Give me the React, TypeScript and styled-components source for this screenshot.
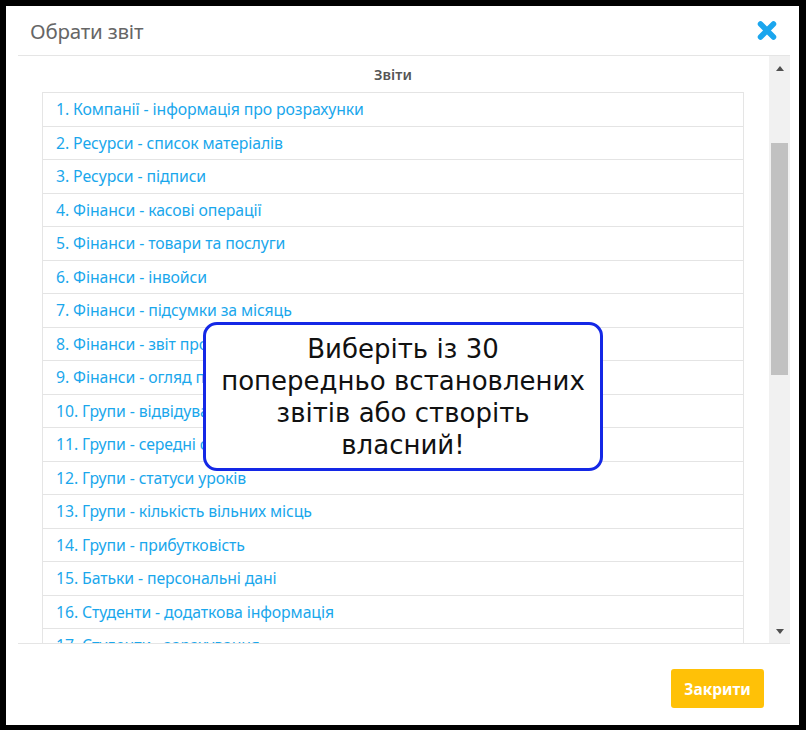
import styled, { createGlobalStyle } from "styled-components";

const GlobalStyle = createGlobalStyle`
    body {
        margin: 0;
        background: #fff;
    }
`;

const Frame = styled.div`
    position: relative;
    width: 806px;
    height: 730px;
    box-sizing: border-box;
    border-style: solid;
    border-color: #000;
    border-width: 6px 7px 5px 6px;
    background: #fff;
    display: flex;
    flex-direction: column;
    font-family: "Noto Sans", "Open Sans", sans-serif;
`;

const Header = styled.header`
    height: 49px;
    margin: 0 9px 0 12px;
    padding: 0 13px 0 12px;
    display: flex;
    align-items: center;
    justify-content: space-between;
    border-bottom: 1px solid #e5e5e5;
`;

const Title = styled.h4`
    margin: 0;
    font-size: 20.5px;
    font-weight: 400;
    color: #666;
    letter-spacing: -0.2px;
`;

const CloseIcon = styled.button`
    border: 0;
    padding: 0;
    background: none;
    display: flex;
    cursor: pointer;
`;

const Body = styled.div`
    height: 587px;
    margin: 0 9px 0 12px;
    display: flex;
    border-bottom: 1px solid #e5e5e5;
`;

const ListPane = styled.div`
    flex: 1;
    overflow: hidden;
    padding: 0 25px 0 24px;
`;

const Caption = styled.div`
    height: 36px;
    display: flex;
    align-items: center;
    justify-content: center;
    font-size: 14.5px;
    font-weight: 600;
    color: #555;
`;

const ReportList = styled.ul`
    margin: 0;
    padding: 0;
    list-style: none;
    border-left: 1px solid #e5e5e5;
    border-right: 1px solid #e5e5e5;
`;

const ReportRow = styled.li`
    height: 33.5px;
    box-sizing: border-box;
    border-top: 1px solid #e4e4e4;
    padding: 0 13px;
    display: flex;
    align-items: center;

    a {
        color: #1aa7ec;
        font-size: 15.8px;
        text-decoration: none;
        letter-spacing: -0.1px;
    }
`;

const Scrollbar = styled.div`
    width: 21px;
    background: #f1f1f1;
    display: flex;
    flex-direction: column;
`;

const ArrowButton = styled.div`
    height: 24px;
    display: flex;
    align-items: center;
    justify-content: center;
`;

const Track = styled.div`
    flex: 1;
    padding: 63px 2px 0 2px;
`;

const Thumb = styled.div`
    height: 232px;
    background: #c1c1c1;
`;

const Footer = styled.footer`
    flex: 1;
    display: flex;
    justify-content: flex-end;
    align-items: flex-start;
    padding: 25px 35px 0 0;
`;

const CloseButton = styled.button`
    width: 93px;
    height: 39px;
    border: 0;
    border-radius: 3px;
    background: #ffc107;
    color: #fff;
    font-family: "Noto Sans", sans-serif;
    font-size: 15.5px;
    font-weight: 700;
    cursor: pointer;
`;

const Callout = styled.div`
    position: absolute;
    left: 197px;
    top: 316px;
    width: 400px;
    height: 149px;
    box-sizing: border-box;
    border: 3px solid #1428e6;
    border-radius: 14px;
    background: #fff;
    display: flex;
    align-items: center;
    justify-content: center;
    text-align: center;
    font-family: "DejaVu Sans", sans-serif;
    font-size: 26px;
    line-height: 32px;
    color: #111;
    padding: 0 10px;
`;

const reports = [
    "Компанії - інформація про розрахунки",
    "Ресурси - список матеріалів",
    "Ресурси - підписи",
    "Фінанси - касові операції",
    "Фінанси - товари та послуги",
    "Фінанси - інвойси",
    "Фінанси - підсумки за місяць",
    "Фінанси - звіт про прибутки",
    "Фінанси - огляд платежів",
    "Групи - відвідуваність",
    "Групи - середні оцінки",
    "Групи - статуси уроків",
    "Групи - кількість вільних місць",
    "Групи - прибутковість",
    "Батьки - персональні дані",
    "Студенти - додаткова інформація",
    "Студенти - зарахування",
    "Студенти - відрахування",
    "Студенти - дні народження",
];

function Arrow({ up }: { up?: boolean }) {
    return (
        <svg width="8" height="5" viewBox="0 0 8 5">
            <path d={up ? "M0 5 L4 0 L8 5 Z" : "M0 0 L4 5 L8 0 Z"} fill="#505050" />
        </svg>
    );
}

function App() {
    return (
        <Frame>
            <GlobalStyle />
            <Header>
                <Title>Обрати звіт</Title>
                <CloseIcon aria-label="close">
                    <svg width="20" height="19" viewBox="0 0 20 19">
                        <path d="M3.5 3 L16.5 16 M16.5 3 L3.5 16" stroke="#1ba6ee" strokeWidth="5.5" strokeLinecap="round" />
                    </svg>
                </CloseIcon>
            </Header>
            <Body>
                <ListPane>
                    <Caption>Звіти</Caption>
                    <ReportList>
                        {reports.map((r, i) => (
                            <ReportRow key={i}>
                                <a href="#">{i + 1}. {r}</a>
                            </ReportRow>
                        ))}
                    </ReportList>
                </ListPane>
                <Scrollbar>
                    <ArrowButton><Arrow up /></ArrowButton>
                    <Track><Thumb /></Track>
                    <ArrowButton><Arrow /></ArrowButton>
                </Scrollbar>
            </Body>
            <Footer>
                <CloseButton>Закрити</CloseButton>
            </Footer>
            <Callout>
                <span>
                    Виберіть із 30<br />
                    попередньо встановлених<br />
                    звітів або створіть<br />
                    власний!
                </span>
            </Callout>
        </Frame>
    );
}

export default App;
